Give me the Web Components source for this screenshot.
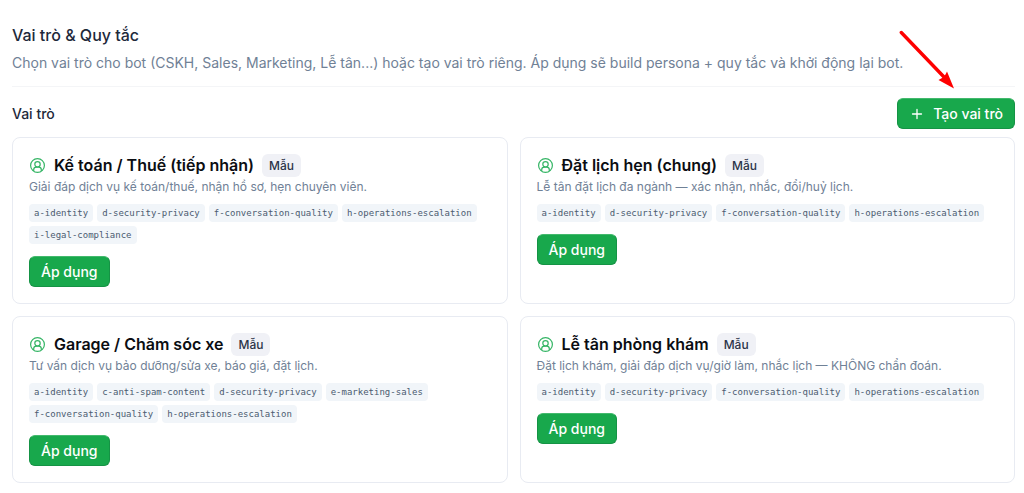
<!DOCTYPE html>
<html lang="vi">
<head>
<meta charset="utf-8">
<meta name="viewport" content="width=device-width, initial-scale=1">
<title>Vai trò &amp; Quy tắc</title>
<style>
  body {
    margin: 0;
    background: #fff;
    color: #1e293b;
    font-family: Inter, "Noto Sans", sans-serif;
  }
</style>
</head>
<body>

<roles-page>
  <page-header slot="header">
    <span slot="title">Vai trò &amp; Quy tắc</span>
    Chọn vai trò cho bot (CSKH, Sales, Marketing, Lễ tân...) hoặc tạo vai trò riêng. Áp dụng sẽ build persona + quy tắc và khởi động lại bot.
  </page-header>
  <span slot="label">Vai trò</span>
  <green-button slot="action" icon="plus">Tạo vai trò</green-button>
  <pointer-arrow slot="pointer"></pointer-arrow>

  <role-card tags="a-identity d-security-privacy f-conversation-quality h-operations-escalation i-legal-compliance">
    <span slot="name">Kế toán / Thuế (tiếp nhận)</span>
    Giải đáp dịch vụ kế toán/thuế, nhận hồ sơ, hẹn chuyên viên.
  </role-card>
  <role-card tags="a-identity d-security-privacy f-conversation-quality h-operations-escalation">
    <span slot="name">Đặt lịch hẹn (chung)</span>
    Lễ tân đặt lịch đa ngành — xác nhận, nhắc, đổi/huỷ lịch.
  </role-card>
  <role-card tags="a-identity c-anti-spam-content d-security-privacy e-marketing-sales f-conversation-quality h-operations-escalation">
    <span slot="name">Garage / Chăm sóc xe</span>
    Tư vấn dịch vụ bảo dưỡng/sửa xe, báo giá, đặt lịch.
  </role-card>
  <role-card tags="a-identity d-security-privacy f-conversation-quality h-operations-escalation">
    <span slot="name">Lễ tân phòng khám</span>
    Đặt lịch khám, giải đáp dịch vụ/giờ làm, nhắc lịch — KHÔNG chẩn đoán.
  </role-card>
</roles-page>

<script>
function render(element, html) {
  const template = document.createElement('template');
  template.innerHTML = html;
  element.attachShadow({ mode: 'open' }).appendChild(template.content.cloneNode(true));
}

class RolesPage extends HTMLElement {
  constructor() {
    super();
    render(this, `
      <style>
        :host {
          display: block;
          padding: 24px 9px 10px 12px;
        }
        .bar {
          display: flex;
          align-items: center;
          justify-content: space-between;
          position: relative;
          margin: 11px 0 8px;
        }
        h2 {
          margin: 0;
          font-size: 14px;
          font-weight: 500;
          line-height: 20px;
        }
        /* the arrow floats over the header and points at the button */
        .pointer {
          position: absolute;
          right: 60px;
          bottom: 40px;
        }
        .grid {
          display: grid;
          grid-template-columns: 1fr 1fr;
          gap: 12px;
        }
      </style>
      <main>
        <slot name="header"></slot>
        <div class="bar">
          <h2><slot name="label"></slot></h2>
          <slot name="action"></slot>
          <div class="pointer"><slot name="pointer"></slot></div>
        </div>
        <div class="grid"><slot></slot></div>
      </main>
    `);
  }
}

class PageHeader extends HTMLElement {
  constructor() {
    super();
    render(this, `
      <style>
        :host {
          display: block;
          padding-bottom: 12px;
          border-bottom: 1px solid #f4f5f7;
        }
        h1 {
          margin: 0 0 6px;
          font-size: 16px;
          font-weight: 500;
          line-height: 22px;
        }
        p {
          margin: 0;
          color: #708196;
          font-size: 14px;
          line-height: 22px;
        }
      </style>
      <h1><slot name="title"></slot></h1>
      <p><slot></slot></p>
    `);
  }
}

class GreenButton extends HTMLElement {
  constructor() {
    super();
    render(this, `
      <style>
        :host {
          display: inline-block;
        }
        button {
          display: flex;
          align-items: center;
          gap: 8px;
          padding: 5px 11px;
          border: 1px solid #159345;
          border-top-color: #43b96d;
          border-radius: 6px;
          background: #18a84c;
          color: #fff;
          font: 500 14px/19px Inter, "Noto Sans", sans-serif;
          white-space: nowrap;
          cursor: pointer;
        }
        svg {
          display: none;
          width: 16px;
          height: 16px;
        }
        :host([icon="plus"]) svg {
          display: block;
        }
      </style>
      <button type="button">
        <svg viewBox="0 0 16 16" fill="none" stroke="currentColor" stroke-width="1.3" stroke-linecap="round" aria-hidden="true">
          <path d="M8 3.500v9M3.500 8h9"/>
        </svg>
        <slot></slot>
      </button>
    `);
  }
}

class PointerArrow extends HTMLElement {
  constructor() {
    super();
    render(this, `
      <style>
        :host {
          display: block;
        }
        svg {
          display: block;
        }
      </style>
      <svg width="56" height="60" viewBox="0 0 56 60" aria-hidden="true">
        <path d="M2.300 3.500L45 48" stroke="#fe0000" stroke-width="3.4" stroke-linecap="round"/>
        <path d="M55 59.500L39.500 51L43 49L46.500 45.500L48 42.500Z" fill="#fe0000"/>
      </svg>
    `);
  }
}

class TagChip extends HTMLElement {
  constructor() {
    super();
    render(this, `
      <style>
        :host {
          display: block;
          padding: 0 5px;
          border-radius: 4px;
          background: #f1f5f9;
          color: #4b5b70;
          font-family: "DejaVu Sans Mono", "Liberation Mono", monospace;
          font-size: 9px;
          line-height: 18px;
        }
      </style>
      <slot></slot>
    `);
  }
}

class RoleCard extends HTMLElement {
  constructor() {
    super();
    render(this, `
      <style>
        :host {
          display: block;
          padding: 16px;
          border: 1px solid #e8ebf2;
          border-radius: 8px;
          background: #fff;
        }
        .title {
          display: flex;
          align-items: center;
          gap: 8px;
        }
        svg {
          flex: none;
          width: 17px;
          height: 17px;
          color: #35b565;
        }
        h3 {
          margin: 0;
          color: #0b0d12;
          font-size: 16px;
          font-weight: 600;
          line-height: 23px;
        }
        .badge {
          padding: 0 7px;
          border-radius: 6px;
          background: #f0f1f6;
          color: #2b3448;
          font-size: 12px;
          font-weight: 500;
          line-height: 23px;
        }
        p {
          margin: 0 0 7px;
          color: #708196;
          font-size: 12px;
          line-height: 20px;
        }
        .tags {
          display: flex;
          flex-wrap: wrap;
          gap: 4px;
          margin-bottom: 12px;
        }
        green-button {
          display: block;
          width: fit-content;
        }
      </style>
      <div class="title">
        <svg viewBox="0 0 17 17" fill="none" stroke="currentColor" stroke-width="1.2" aria-hidden="true">
          <circle cx="8.500" cy="8.500" r="6.900"/>
          <circle cx="8.500" cy="7.300" r="2.700"/>
          <path d="M4.700 14v-1.200c0-1.600 1.100-2.700 2.700-2.700h2.200c1.600 0 2.700 1.100 2.700 2.700V14"/>
        </svg>
        <h3><slot name="name"></slot></h3>
        <span class="badge">Mẫu</span>
      </div>
      <p><slot></slot></p>
      <div class="tags"></div>
      <green-button>Áp dụng</green-button>
    `);
  }

  connectedCallback() {
    const tags = this.shadowRoot.querySelector('.tags');
    tags.innerHTML = '';
    for (const name of this.getAttribute('tags').split(' ')) {
      const chip = document.createElement('tag-chip');
      chip.textContent = name;
      tags.appendChild(chip);
    }
  }
}

customElements.define('green-button', GreenButton);
customElements.define('pointer-arrow', PointerArrow);
customElements.define('tag-chip', TagChip);
customElements.define('page-header', PageHeader);
customElements.define('role-card', RoleCard);
customElements.define('roles-page', RolesPage);
</script>
</body>
</html>
